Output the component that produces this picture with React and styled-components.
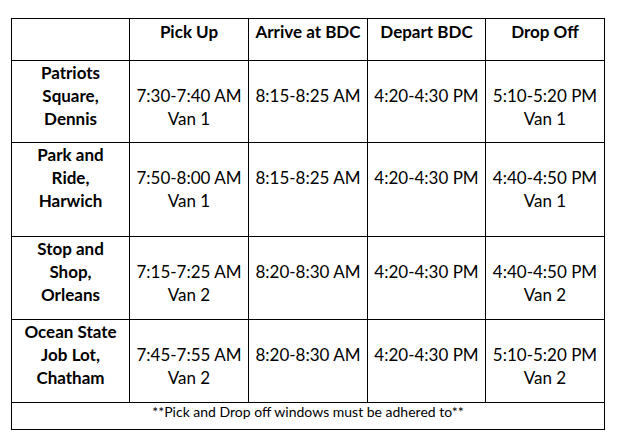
import React from 'react';
import styled, { createGlobalStyle } from 'styled-components';

const GlobalStyle = createGlobalStyle`
  body {
    margin: 0;
    background: #ffffff;
    font-family: Lato, "Liberation Sans", sans-serif;
    color: #000000;
  }
`;

const Page = styled.div`
  padding: 18px 0 0 11px;
`;

const Table = styled.table`
  border-collapse: collapse;
  table-layout: fixed;
  width: 593px;
`;

const Row = styled.tr`
  height: ${p => p.h}px;
`;

const HeadCell = styled.th`
  border: 1px solid #000;
  vertical-align: top;
  text-align: center;
  padding: 1px 0 0;
  font-size: 17px;
  line-height: 23px;
  font-weight: 700;
`;

const PlaceCell = styled.th`
  border: 1px solid #000;
  vertical-align: top;
  text-align: center;
  padding: 0;
  font-size: 17px;
  line-height: 23px;
  font-weight: 700;
`;

const TimeCell = styled.td`
  border: 1px solid #000;
  vertical-align: top;
  text-align: center;
  padding: 23px 0 0;
  font-size: 17px;
  line-height: 23px;
  white-space: nowrap;
`;

const Line = styled.div``;

const NoteCell = styled.td`
  border: 1px solid #000;
  vertical-align: top;
  text-align: center;
  padding: 0;
  font-size: 14px;
  line-height: 18px;
`;

const stops = [
  { place: ['Patriots', 'Square,', 'Dennis'], h: 82, pick: '7:30-7:40 AM', arrive: '8:15-8:25 AM', drop: '5:10-5:20 PM', van: 'Van 1' },
  { place: ['Park and', 'Ride,', 'Harwich'], h: 94, pick: '7:50-8:00 AM', arrive: '8:15-8:25 AM', drop: '4:40-4:50 PM', van: 'Van 1' },
  { place: ['Stop and', 'Shop,', 'Orleans'], h: 83, pick: '7:15-7:25 AM', arrive: '8:20-8:30 AM', drop: '4:40-4:50 PM', van: 'Van 2' },
  { place: ['Ocean State', 'Job Lot,', 'Chatham'], h: 83, pick: '7:45-7:55 AM', arrive: '8:20-8:30 AM', drop: '5:10-5:20 PM', van: 'Van 2' },
];

export default function App() {
  return (
    <>
      <GlobalStyle />
      <Page>
        <Table>
          <colgroup>
            <col style={{ width: 118 }} />
            <col style={{ width: 119 }} />
            <col style={{ width: 119 }} />
            <col style={{ width: 118 }} />
            <col style={{ width: 119 }} />
          </colgroup>
          <tbody>
            <Row h={42}>
              <HeadCell></HeadCell>
              <HeadCell>Pick Up</HeadCell>
              <HeadCell>Arrive at BDC</HeadCell>
              <HeadCell>Depart BDC</HeadCell>
              <HeadCell>Drop Off</HeadCell>
            </Row>
            {stops.map(s => (
              <Row h={s.h} key={s.place[0]}>
                <PlaceCell>
                  {s.place.map(l => <Line key={l}>{l}</Line>)}
                </PlaceCell>
                <TimeCell>
                  <Line>{s.pick}</Line>
                  <Line>{s.van}</Line>
                </TimeCell>
                <TimeCell>{s.arrive}</TimeCell>
                <TimeCell>4:20-4:30 PM</TimeCell>
                <TimeCell>
                  <Line>{s.drop}</Line>
                  <Line>{s.van}</Line>
                </TimeCell>
              </Row>
            ))}
            <Row h={27}>
              <NoteCell colSpan={5}>**Pick and Drop off windows must be adhered to**</NoteCell>
            </Row>
          </tbody>
        </Table>
      </Page>
    </>
  );
}
